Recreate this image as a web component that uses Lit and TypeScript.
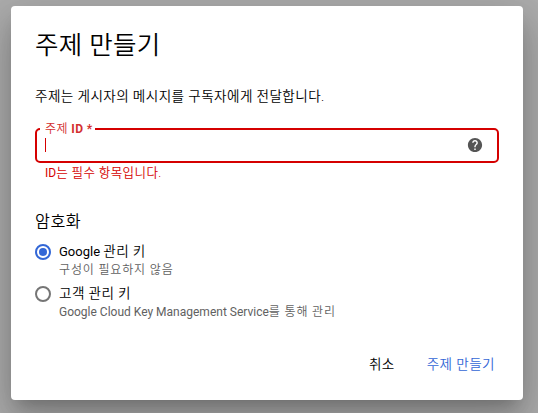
import { LitElement, html, css } from "lit";
import { customElement, property } from "lit/decorators.js";

@customElement("radio-option")
class RadioOption extends LitElement {
  @property({ type: Boolean }) checked = false;
  static styles = css`
    :host { display: flex; height: 42px; gap: 8px; }
    .ring {
      box-sizing: border-box; width: 16px; height: 16px; margin-top: 2px; flex: none;
      border: 2px solid #757575; border-radius: 50%;
      display: flex; align-items: center; justify-content: center;
    }
    .ring.on { border-color: #3367d6; }
    .on .dot { width: 8px; height: 8px; border-radius: 50%; background: #3367d6; }
    .texts { display: flex; flex-direction: column; white-space: nowrap; }
    .label { font-size: 13px; line-height: 20px; height: 19px; color: #000; }
    .hint { font-size: 12px; line-height: 18px; color: #616161; }
  `;
  render() {
    return html`
      <div class="ring ${this.checked ? "on" : ""}"><div class="dot"></div></div>
      <div class="texts">
        <div class="label"><slot></slot></div>
        <div class="hint"><slot name="hint"></slot></div>
      </div>
    `;
  }
}

@customElement("app-root")
class AppRoot extends LitElement {
  static styles = css`
    :host {
      display: block; box-sizing: border-box; width: 538px; height: 413px;
      padding: 6px 15px 13px 11px; overflow: hidden; background: #adadad;
      font-family: Roboto, "Noto Sans CJK KR", sans-serif; color: #000;
    }
    .dialog {
      box-sizing: border-box; height: 394px; padding: 0 24px; border-radius: 4px; background: #fff;
      box-shadow: 0 11px 15px -7px rgba(0,0,0,.2), 0 24px 38px 3px rgba(0,0,0,.14), 0 9px 46px 8px rgba(0,0,0,.12);
      display: flex; flex-direction: column; white-space: nowrap;
    }
    .ko { font-size: 1.045em; line-height: 1; letter-spacing: .031em; font-weight: 350; }
    .hint-ko { letter-spacing: .85px; font-weight: 350; }
    .title { margin: 22px 0 0; font-size: 25.5px; line-height: 34px; font-weight: 350; letter-spacing: .35px; }
    .intro { margin: 25px 0 0; font-size: 13px; line-height: 20px; }
    .field {
      box-sizing: border-box; height: 35px; margin: 21px 0 0; padding: 0 14px 0 8px;
      border: 2px solid #d50000; border-radius: 5px; position: relative;
      display: flex; align-items: center; justify-content: space-between;
    }
    .name {
      position: absolute; left: 3px; top: -10px; padding: 0 2px 0 5px; background: #fff;
      font-size: 12px; line-height: 18px; color: #d32f2f; letter-spacing: .4px; font-weight: 350;
    }
    .name b { font-weight: 700; }
    .caret { width: 1px; height: 15px; margin-bottom: 2px; background: #d50000; }
    .help { width: 16px; height: 16px; margin-bottom: 1px; display: block; }
    .error { margin: 1px 0 0 10px; font-size: 12px; line-height: 18px; color: #d50000; }
    .section { margin: 29px 0 0; font-size: 15.5px; line-height: 22px; font-weight: 400; }
    .options { margin-top: 9px; }
    .actions { margin-top: 29px; display: flex; justify-content: flex-end; gap: 32px; padding-right: 4px; font-size: 13px; line-height: 20px; }
    .action { border: 0; padding: 0; background: none; font: inherit; color: #000; }
    .primary { color: #3367d6; }
  `;
  render() {
    return html`
      <div class="dialog" role="dialog">
        <h1 class="title">주제 만들기</h1>
        <p class="intro"><span class="ko">주제는 게시자의 메시지를 구독자에게 전달합니다.</span></p>
        <div class="field">
          <label class="name">주제 <b>ID *</b></label>
          <div class="caret"></div>
          <svg class="help" viewBox="0.75 0.75 22.5 22.5"><path fill="#555" d="M12 2C6.48 2 2 6.48 2 12s4.48 10 10 10 10-4.48 10-10S17.52 2 12 2zm1 17h-2v-2h2v2zm2.07-7.75l-.9.92C13.45 12.9 13 13.5 13 15h-2v-.5c0-1.1.45-2.1 1.17-2.83l1.24-1.26c.37-.36.59-.86.59-1.41 0-1.1-.9-2-2-2s-2 .9-2 2H8c0-2.210 1.790-4 4-4s4 1.790 4 4c0 .88-.36 1.680-.93 2.250z"/></svg>
        </div>
        <div class="error">ID<span class="ko">는 필수 항목입니다.</span></div>
        <h2 class="section"><span class="ko">암호화</span></h2>
        <div class="options">
          <radio-option checked>Google <span class="ko">관리 키</span><span slot="hint" class="hint-ko">구성이 필요하지 않음</span></radio-option>
          <radio-option><span class="ko">고객 관리 키</span><span slot="hint">Google Cloud Key Management Service<span class="hint-ko">를 통해 관리</span></span></radio-option>
        </div>
        <div class="actions">
          <button class="action"><span class="ko">취소</span></button>
          <button class="action primary"><span class="ko">주제 만들기</span></button>
        </div>
      </div>
    `;
  }
}
